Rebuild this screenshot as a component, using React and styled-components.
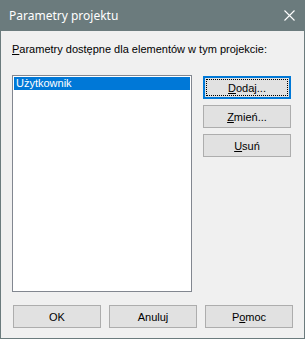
import React from "react";
import styled, { createGlobalStyle } from "styled-components";

const Global = createGlobalStyle`
  html, body { margin: 0; padding: 0; background: #ffffff; }
  body { font-family: Tahoma, "DejaVu Sans", sans-serif; }
`;

const Window = styled.div`
  width: 305px;
  height: 339px;
  box-sizing: border-box;
  border: 1px solid #6b7b7d;
  border-top: none;
  background: #f0f0f0;
  display: flex;
  flex-direction: column;
`;

const TitleBar = styled.div`
  height: 31px;
  margin: 0 -1px;
  background: #6b7b7d;
  display: flex;
  align-items: center;
  justify-content: space-between;
  padding: 0 10px 0 9px;
  flex-shrink: 0;
`;

const Title = styled.span`
  color: #ffffff;
  font-family: "Noto Sans", "Open Sans", sans-serif;
  font-size: 12px;
  letter-spacing: 0;
`;

const Body = styled.div`
  flex: 1;
  display: flex;
  flex-direction: column;
  padding: 12px 11px 0 11px;
`;

const Label = styled.div`
  font-family: "Liberation Sans", Arial, sans-serif;
  font-size: 11px;
  line-height: 13px;
  color: #000;
  margin-left: 0;
  height: 13px;
`;

const Content = styled.div`
  display: flex;
  margin-top: 19px;
  gap: 11px;
`;

const ListBox = styled.div`
  width: 180px;
  height: 217px;
  box-sizing: border-box;
  border: 1px solid #828790;
  background: #ffffff;
  padding: 1px;
`;

const ListItem = styled.div`
  height: 13px;
  line-height: 13px;
  padding-left: 2px;
  font-family: "Liberation Sans", Arial, sans-serif;
  font-size: 11px;
  color: ${(p) => (p.$selected ? "#ffffff" : "#000")};
  background: ${(p) => (p.$selected ? "#0078d7" : "transparent")};
`;

const SideButtons = styled.div`
  display: flex;
  flex-direction: column;
  gap: 6px;
  padding-top: 1px;
`;

const Button = styled.button`
  width: 88px;
  height: 23px;
  box-sizing: border-box;
  margin: 0;
  padding: 0;
  background: #e1e1e1;
  border: ${(p) => (p.$default ? "2px solid #0078d7" : "1px solid #adadad")};
  font-family: "Liberation Sans", Arial, sans-serif;
  font-size: 11px;
  color: #000;
  display: flex;
  align-items: center;
  justify-content: center;
  position: relative;
  outline: none;
`;

const Focus = styled.span`
  position: absolute;
  inset: 1px;
  border: 1px dotted #000;
`;

const ButtonText = styled.span`
  position: relative;
`;

const Footer = styled.div`
  display: flex;
  gap: 8px;
  margin-top: 13px;
  padding-left: 1px;
`;

const CloseIcon = () => (
  <svg width="11" height="11" viewBox="0 0 11 11" fill="none">
    <path d="M0.5 0.5 L10.5 10.5 M10.5 0.5 L0.5 10.5" stroke="#ffffff" strokeWidth="1.1" />
  </svg>
);

export default function App() {
  return (
    <>
      <Global />
      <Window>
        <TitleBar>
          <Title>Parametry projektu</Title>
          <CloseIcon />
        </TitleBar>
        <Body>
          <Label>
            <u>P</u>arametry dostępne dla elementów w tym projekcie:
          </Label>
          <Content>
            <ListBox>
              <ListItem $selected>Użytkownik</ListItem>
            </ListBox>
            <SideButtons>
              <Button $default>
                <Focus />
                <ButtonText>
                  <u>D</u>odaj...
                </ButtonText>
              </Button>
              <Button>
                <ButtonText>
                  <u>Z</u>mień...
                </ButtonText>
              </Button>
              <Button>
                <ButtonText>
                  <u>U</u>suń
                </ButtonText>
              </Button>
            </SideButtons>
          </Content>
          <Footer>
            <Button>OK</Button>
            <Button>Anuluj</Button>
            <Button>
              <ButtonText>
                P<u>o</u>moc
              </ButtonText>
            </Button>
          </Footer>
        </Body>
      </Window>
    </>
  );
}
